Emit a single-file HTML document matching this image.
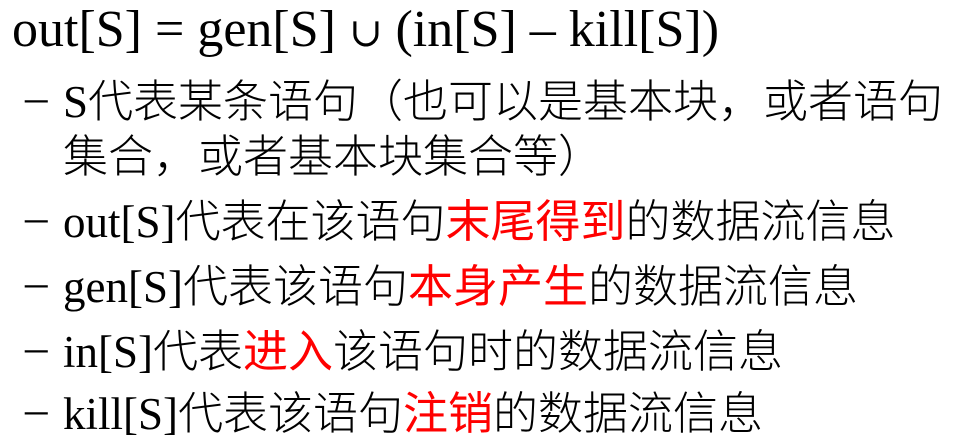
<!DOCTYPE html>
<html><head><meta charset="utf-8"><style>
html,body{margin:0;padding:0;background:#fff;width:979px;height:444px;overflow:hidden}
.l{position:absolute;white-space:nowrap;font-family:"Liberation Serif","Noto Sans CJK SC",serif;font-size:45px;line-height:45px;color:#000}
.c{font-family:"Noto Sans CJK SC",sans-serif;font-weight:300}
.r{color:#ff0000;font-family:"Noto Sans CJK SC",sans-serif;font-weight:400}
.d{position:absolute;left:25px}
.u{font-family:"DejaVu Serif",serif;font-size:40px}
</style></head><body>
<div class="l" style="left:12px;top:4px;font-size:52px;line-height:52px">out[S] = gen[S] <span class="u">∪</span> (in[S] – kill[S])</div>
<div class="l" style="top:75px"><span class="d">–</span><span style="position:absolute;left:63px">S<span class="c">代表某条语句（也可以是基本块，或者语句</span></span></div>
<div class="l" style="top:130px;left:63px"><span class="c">集合，或者基本块集合等）</span></div>
<div class="l" style="top:195px"><span class="d">–</span><span style="position:absolute;left:63px">out[S]<span class="c">代表在该语句</span><span class="r">末尾得到</span><span class="c">的数据流信息</span></span></div>
<div class="l" style="top:260px"><span class="d">–</span><span style="position:absolute;left:63px">gen[S]<span class="c">代表该语句</span><span class="r">本身产生</span><span class="c">的数据流信息</span></span></div>
<div class="l" style="top:325px"><span class="d">–</span><span style="position:absolute;left:63px">in[S]<span class="c">代表</span><span class="r">进入</span><span class="c">该语句时的数据流信息</span></span></div>
<div class="l" style="top:387px"><span class="d">–</span><span style="position:absolute;left:63px">kill[S]<span class="c">代表该语句</span><span class="r">注销</span><span class="c">的数据流信息</span></span></div>
</body></html>
